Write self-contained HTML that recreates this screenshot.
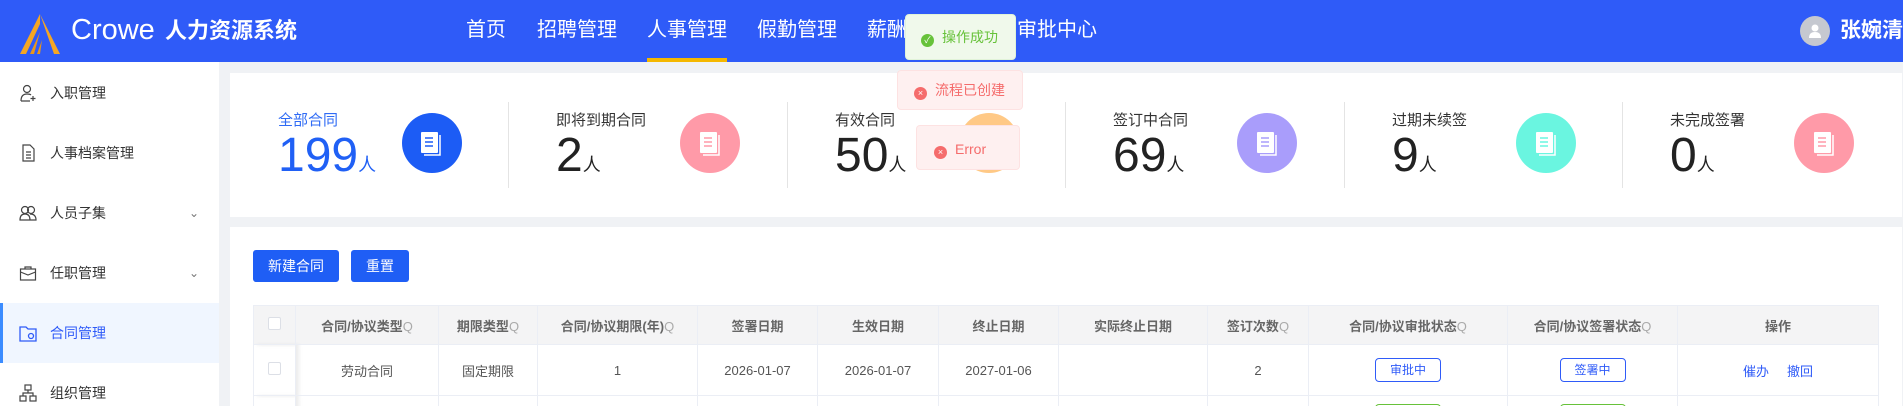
<!DOCTYPE html>
<html style="width:1903px;height:406px;overflow:hidden"><head><meta charset="utf-8"><style>
*{box-sizing:border-box;margin:0;padding:0}
body{width:1903px;height:406px;overflow:hidden;background:#f0f2f5;font-family:"Liberation Sans","Noto Sans CJK SC",sans-serif;position:relative;color:#333}
.abs{position:absolute}
.hdr{left:0;top:0;width:1903px;height:62px;background:#2f5bf8}
.nav{top:17px;font-size:20px;color:#fff;line-height:26px;white-space:nowrap}
.side{left:0;top:62px;width:219px;height:344px;background:#fff}
.si{left:0;width:219px;height:60px;font-size:14px;color:#333;line-height:60px}
.si span{position:absolute;left:50px}
.si svg{position:absolute;left:19px;top:21px}
.chev{position:absolute;left:189px;top:0;font-size:12px;color:#777}
.card{background:#fff}
.st{top:73px;height:144px;width:279px}
.st .t{position:absolute;left:48px;top:36px;font-size:15px;color:#333}
.st .n{position:absolute;left:48px;top:54px;font-size:48px;color:#222;line-height:58px}
.st .n small{font-size:18px}
.st .c{position:absolute;left:172px;top:40px;width:60px;height:60px;border-radius:50%}
.st .d{position:absolute;left:0;top:29px;width:1px;height:86px;background:#e4e4e4}
.btn{top:250px;height:32px;background:#1f5ef5;color:#fff;font-size:14px;line-height:32px;text-align:center;border-radius:3px}
.tw{position:absolute;left:253px;top:305px;width:1630px;height:101px;overflow:hidden}
table{border-collapse:collapse;font-size:13px;table-layout:fixed}
th{height:39px;background:#f4f4f5;color:#666;font-weight:bold;border:1px solid #ebeef5;white-space:nowrap;font-size:13px}
td{height:51px;color:#555;text-align:center;border:1px solid #ebeef5;white-space:nowrap}
.q{color:#aaa;font-weight:normal}
.tag{display:inline-block;width:66px;height:24px;line-height:22px;border:1px solid #2f5bf8;border-radius:4px;color:#2f5bf8;font-size:12px}
.gtag{display:inline-block;width:66px;height:24px;border:1px solid #67c23a;border-radius:4px}
.cb{display:inline-block;width:13px;height:13px;border:1px solid #dcdfe6;border-radius:2px;background:#fff}
.toast{font-size:14px;border-radius:4px;line-height:1}
.ok{background:#f0f9eb;border:1px solid #e1f3d8;color:#67c23a}
.er{background:#fef0f0;border:1px solid #fde2e2;color:#f56c6c}
.ic{display:inline-block;width:13px;height:13px;border-radius:50%;color:#fff;font-size:9px;text-align:center;line-height:13px;vertical-align:-1px;margin-right:8px}
</style></head><body>
<div class="abs hdr"></div>
<svg class="abs" style="left:18px;top:12px" width="44" height="44" viewBox="0 0 44 44"><path d="M22 2 L2 42 L8 42 L22 12Z" fill="#f5a623"/><path d="M22 2 L42 42 L36 42 Z" fill="#f5a623"/><path d="M12 42 L22 20 L16 42Z M19 42 L24 28 L22 42Z" fill="#e8961a"/></svg>
<div class="abs" style="left:71px;top:12px;font-size:29px;color:#fff;line-height:36px">Crowe</div>
<div class="abs" style="left:165px;top:17px;font-size:22px;font-weight:bold;color:#fff;line-height:28px">人力资源系统</div>
<div class="abs nav" style="left:466px">首页</div>
<div class="abs nav" style="left:537px">招聘管理</div>
<div class="abs nav" style="left:647px">人事管理</div>
<div class="abs" style="left:647px;top:58px;width:80px;height:4px;background:#f5b800"></div>
<div class="abs nav" style="left:757px">假勤管理</div>
<div class="abs nav" style="left:867px">薪酬管理</div>
<div class="abs nav" style="left:1017px">审批中心</div>
<div class="abs" style="left:1800px;top:16px;width:30px;height:30px;border-radius:50%;background:#c5c8d0"></div>
<svg class="abs" style="left:1806px;top:22px" width="18" height="18" viewBox="0 0 18 18"><circle cx="9" cy="6" r="3.5" fill="#fff"/><path d="M3 16 Q3 10 9 10 Q15 10 15 16Z" fill="#fff"/></svg>
<div class="abs" style="left:1840px;top:17px;font-size:21px;font-weight:bold;color:#fff;line-height:28px;white-space:nowrap">张婉清</div>

<div class="abs side"></div>
<div class="abs si" style="top:63px"><svg width="18" height="18" viewBox="0 0 18 18" fill="none" stroke="#444" stroke-width="1.2"><circle cx="8" cy="5" r="3.5"/><path d="M2 17 Q2 10 8 10 Q11 10 12 11"/><path d="M2 17h9M14 12v5M11.5 14.5h5"/></svg><span>入职管理</span></div>
<div class="abs si" style="top:123px"><svg width="18" height="18" viewBox="0 0 18 18" fill="none" stroke="#444" stroke-width="1.2"><path d="M4 1h7l4 4v12H4z"/><path d="M7 8h5M7 11h5M7 14h5"/></svg><span>人事档案管理</span></div>
<div class="abs si" style="top:183px"><svg width="18" height="18" viewBox="0 0 18 18" fill="none" stroke="#444" stroke-width="1.2"><circle cx="6" cy="6" r="3.5"/><circle cx="12" cy="6" r="3.5"/><path d="M1 16 Q1 10 6 10 Q11 10 11 16Z M11 10 Q17 10 17 16H11"/></svg><span>人员子集</span><i class="chev" style="font-style:normal">&#8964;</i></div>
<div class="abs si" style="top:243px"><svg width="18" height="18" viewBox="0 0 18 18" fill="none" stroke="#444" stroke-width="1.2"><rect x="1.5" y="5" width="15" height="11"/><path d="M6 5V3h6v2M1.5 8l7.5 3 7.5-3"/></svg><span>任职管理</span><i class="chev" style="font-style:normal">&#8964;</i></div>
<div class="abs si" style="top:303px;background:#f0f6ff;color:#2f5bf8"><i style="position:absolute;left:0;top:0;width:3px;height:60px;background:#3b8cff"></i><svg width="18" height="18" viewBox="0 0 18 18" fill="none" stroke="#2f5bf8" stroke-width="1.3"><path d="M1 3h6l2 2h8v12H1z"/><circle cx="12" cy="12" r="2.5"/></svg><span>合同管理</span></div>
<div class="abs si" style="top:363px;height:43px;overflow:hidden"><svg width="18" height="18" viewBox="0 0 18 18" fill="none" stroke="#444" stroke-width="1.2"><rect x="6" y="1" width="6" height="5"/><rect x="1" y="12" width="6" height="5"/><rect x="11" y="12" width="6" height="5"/><path d="M9 6v3M4 12V9h10v3"/></svg><span>组织管理</span></div>

<div class="abs card" style="left:230px;top:73px;width:1672px;height:144px"></div>
<div class="abs st" style="left:230px"><div class="t" style="color:#2f6bf5">全部合同</div><div class="n" style="color:#2060f5">199<small>人</small></div><div class="c" style="background:#1c5cf5"></div></div>
<div class="abs st" style="left:508px"><div class="d"></div><div class="t">即将到期合同</div><div class="n">2<small>人</small></div><div class="c" style="background:#ff9aa8"></div></div>
<div class="abs st" style="left:787px"><div class="d"></div><div class="t">有效合同</div><div class="n">50<small>人</small></div><div class="c" style="background:#ffc986"></div></div>
<div class="abs st" style="left:1065px"><div class="d"></div><div class="t">签订中合同</div><div class="n">69<small>人</small></div><div class="c" style="background:#a99dfb"></div></div>
<div class="abs st" style="left:1344px"><div class="d"></div><div class="t">过期未续签</div><div class="n">9<small>人</small></div><div class="c" style="background:#6af5e0"></div></div>
<div class="abs st" style="left:1622px"><div class="d"></div><div class="t">未完成签署</div><div class="n">0<small>人</small></div><div class="c" style="background:#ff9aa8"></div></div>
<svg class="abs" style="left:417px;top:129px" width="28" height="28" viewBox="0 0 28 28"><rect x="4" y="3" width="17" height="21" rx="1" fill="#fff"/><path d="M23 6v20H7" stroke="#fff" stroke-width="1.5" fill="none"/><path d="M8 9h8M8 13h8M8 17h8" stroke="#1c5cf5" stroke-width="1.6"/></svg>
<svg class="abs" style="left:696px;top:129px" width="28" height="28" viewBox="0 0 28 28"><rect x="4" y="3" width="17" height="21" rx="1" fill="#fff"/><path d="M23 6v20H7" stroke="#fff" stroke-width="1.5" fill="none"/><path d="M8 9h8M8 13h8M8 17h8" stroke="#ff9aa8" stroke-width="1.6"/></svg>
<svg class="abs" style="left:1253px;top:129px" width="28" height="28" viewBox="0 0 28 28"><rect x="4" y="3" width="17" height="21" rx="1" fill="#fff"/><path d="M23 6v20H7" stroke="#fff" stroke-width="1.5" fill="none"/><path d="M8 9h8M8 13h8M8 17h8" stroke="#a99dfb" stroke-width="1.6"/></svg>
<svg class="abs" style="left:1532px;top:129px" width="28" height="28" viewBox="0 0 28 28"><rect x="4" y="3" width="17" height="21" rx="1" fill="#fff"/><path d="M23 6v20H7" stroke="#fff" stroke-width="1.5" fill="none"/><path d="M8 9h8M8 13h8M8 17h8" stroke="#6af5e0" stroke-width="1.6"/></svg>
<svg class="abs" style="left:1810px;top:129px" width="28" height="28" viewBox="0 0 28 28"><rect x="4" y="3" width="17" height="21" rx="1" fill="#fff"/><path d="M23 6v20H7" stroke="#fff" stroke-width="1.5" fill="none"/><path d="M8 9h8M8 13h8M8 17h8" stroke="#ff9aa8" stroke-width="1.6"/></svg>

<div class="abs card" style="left:230px;top:227px;width:1672px;height:179px"></div>
<div class="abs btn" style="left:253px;width:86px">新建合同</div>
<div class="abs btn" style="left:351px;width:58px">重置</div>
<div class="tw"><table>
<colgroup><col style="width:42px"><col style="width:143px"><col style="width:99px"><col style="width:160px"><col style="width:120px"><col style="width:121px"><col style="width:120px"><col style="width:149px"><col style="width:101px"><col style="width:199px"><col style="width:170px"><col style="width:201px"></colgroup>
<tr><th style="box-shadow:3px 0 4px rgba(0,0,0,.08)"><span class="cb"></span></th><th>合同/协议类型<span class="q">Q</span></th><th>期限类型<span class="q">Q</span></th><th>合同/协议期限(年)<span class="q">Q</span></th><th>签署日期</th><th>生效日期</th><th>终止日期</th><th>实际终止日期</th><th>签订次数<span class="q">Q</span></th><th>合同/协议审批状态<span class="q">Q</span></th><th>合同/协议签署状态<span class="q">Q</span></th><th>操作</th></tr>
<tr><td style="box-shadow:3px 0 4px rgba(0,0,0,.08)"><span class="cb"></span></td><td>劳动合同</td><td>固定期限</td><td>1</td><td>2026-01-07</td><td>2026-01-07</td><td>2027-01-06</td><td></td><td>2</td><td><span class="tag">审批中</span></td><td><span class="tag">签署中</span></td><td style="color:#2f5bf8">催办&nbsp;&nbsp;&nbsp;&nbsp;&nbsp;撤回</td></tr>
<tr><td style="box-shadow:3px 0 4px rgba(0,0,0,.08)"></td><td></td><td></td><td></td><td></td><td></td><td></td><td></td><td></td><td style="vertical-align:top;padding-top:8px"><span class="gtag"></span></td><td style="vertical-align:top;padding-top:8px"><span class="gtag"></span></td><td></td></tr>
</table></div>

<div class="abs toast ok" style="left:905px;top:14px;width:111px;height:46px;padding:15px 0 0 15px"><span class="ic" style="background:#67c23a">✓</span>操作成功</div>
<div class="abs toast er" style="left:897px;top:70px;width:126px;height:40px;padding:12px 0 0 16px"><span class="ic" style="background:#f56c6c">×</span>流程已创建</div>
<div class="abs toast er" style="left:916px;top:125px;width:104px;height:45px;padding:16px 0 0 17px"><span class="ic" style="background:#f56c6c">×</span>Error</div>
</body></html>
